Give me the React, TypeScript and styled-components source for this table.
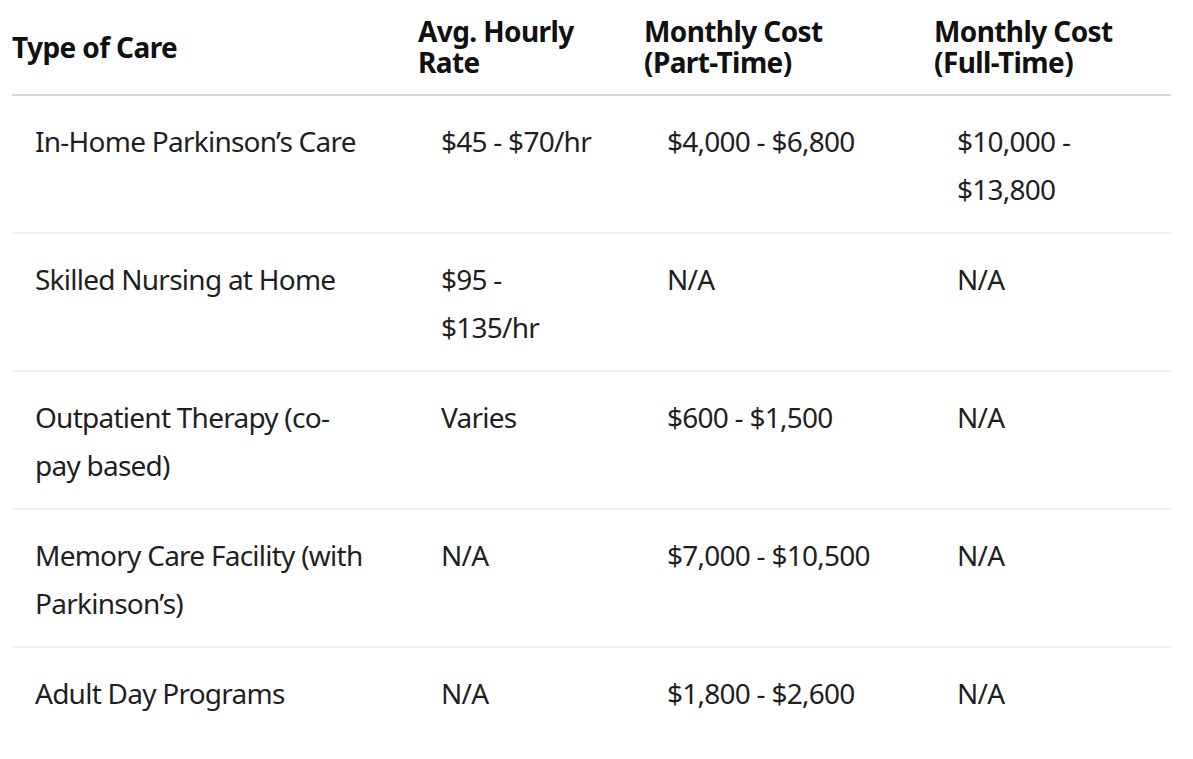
import React from "react";
import styled, { createGlobalStyle } from "styled-components";

const Global = createGlobalStyle`
  html, body { margin: 0; padding: 0; background: #ffffff; }
  body { font-family: "Noto Sans", "Open Sans", sans-serif; color: #1f1f1f; }
`;

const Page = styled.div`
  padding: 0 22px 0 12px;
`;

const Table = styled.table`
  width: 1159px;
  border-collapse: collapse;
  table-layout: fixed;
`;

const HeadCell = styled.th`
  text-align: left;
  vertical-align: middle;
  font-weight: 700;
  font-size: 28px;
  letter-spacing: -0.6px;
  line-height: 31px;
  color: #111111;
  padding: 16px 0 16px 0;
  border-bottom: 2px solid #dadada;
`;

const BodyRow = styled.tr`
  border-bottom: 2px solid #f0f0f0;
  &:last-child {
    border-bottom: none;
  }
`;

const Cell = styled.td`
  vertical-align: top;
  font-size: 28px;
  letter-spacing: -0.75px;
  line-height: 48px;
  color: #1f1f1f;
  padding: 21px 0 19px 23px;
`;

const Line = styled.span`
  display: block;
  white-space: nowrap;
`;

const widths = [406, 226, 290, 237];

const headers: string[][] = [
  ["Type of Care"],
  ["Avg. Hourly", "Rate"],
  ["Monthly Cost", "(Part-Time)"],
  ["Monthly Cost", "(Full-Time)"],
];

const rows: string[][][] = [
  [["In-Home Parkinson\u2019s Care"], ["$45 - $70/hr"], ["$4,000 - $6,800"], ["$10,000 -", "$13,800"]],
  [["Skilled Nursing at Home"], ["$95 -", "$135/hr"], ["N/A"], ["N/A"]],
  [["Outpatient Therapy (co-", "pay based)"], ["Varies"], ["$600 - $1,500"], ["N/A"]],
  [["Memory Care Facility (with", "Parkinson\u2019s)"], ["N/A"], ["$7,000 - $10,500"], ["N/A"]],
  [["Adult Day Programs"], ["N/A"], ["$1,800 - $2,600"], ["N/A"]],
];

export default function App() {
  return (
    <Page>
      <Global />
      <Table>
        <colgroup>
          {widths.map((w, i) => (
            <col key={i} style={{ width: w }} />
          ))}
        </colgroup>
        <thead>
          <tr>
            {headers.map((h, i) => (
              <HeadCell key={i}>
                {h.map((l, j) => (
                  <Line key={j}>{l}</Line>
                ))}
              </HeadCell>
            ))}
          </tr>
        </thead>
        <tbody>
          {rows.map((r, i) => (
            <BodyRow key={i}>
              {r.map((c, j) => (
                <Cell key={j}>
                  {c.map((l, k) => (
                    <Line key={k}>{l}</Line>
                  ))}
                </Cell>
              ))}
            </BodyRow>
          ))}
        </tbody>
      </Table>
    </Page>
  );
}
